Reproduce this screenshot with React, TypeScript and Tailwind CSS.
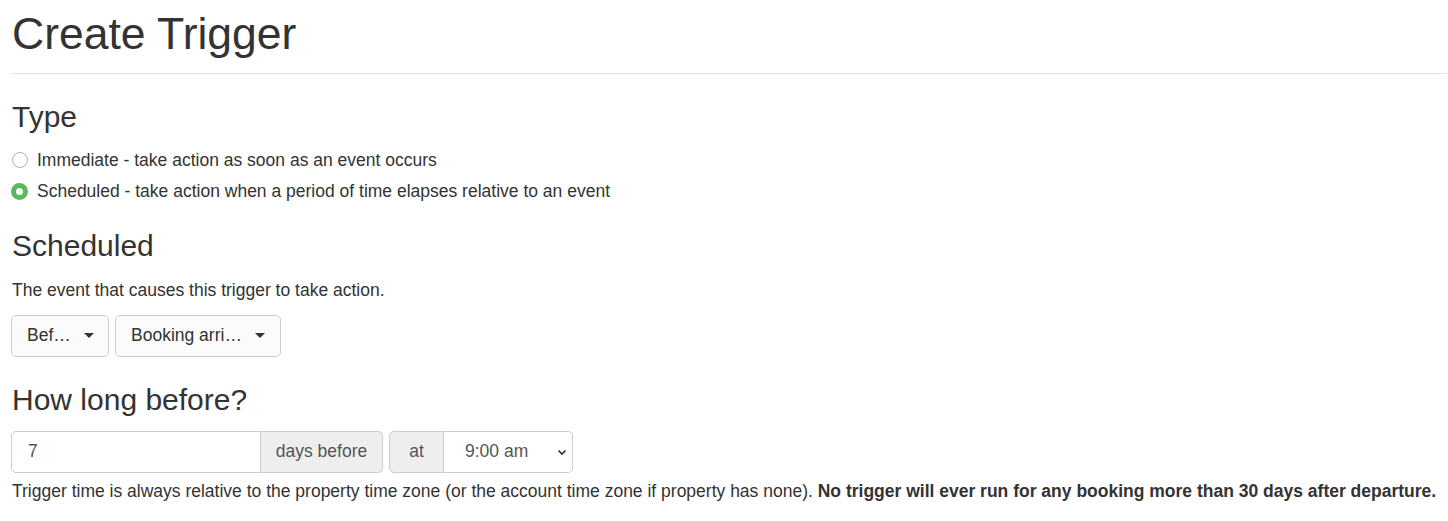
const Caret = () => (
    <span className="ml-[13px] inline-block h-0 w-0 border-x-[5px] border-t-[5px] border-x-transparent border-t-[#333]" />
)

const Radio = ({ checked, label }: { checked?: boolean; label: string }) => (
    <label className="flex h-[25px] items-center">
        {checked ? (
            <span className="box-border h-[17px] w-[17px] shrink-0 rounded-full border-[5px] border-[#5cb85c] bg-white" />
        ) : (
            <span className="ml-px box-border h-[16px] w-[16px] shrink-0 rounded-full border border-[#b3b3b3] bg-white" />
        )}
        <span className="ml-[9px]">{label}</span>
    </label>
)

export default function App() {
    return (
        <div
            className="bg-white pl-[11px] pr-px pt-[9px] text-[17.5px] leading-[25px] text-[#333]"
            style={{ fontFamily: '"Liberation Sans", Arial, sans-serif' }}
        >
            <h1 className="pl-px text-[44.5px] leading-[49.5px]">Create Trigger</h1>
            <hr className="mt-[14px] border-t border-[#e3e3e3]" />

            <h3 className="mt-[26px] pl-px text-[30px] leading-[33px]">Type</h3>
            <div className="mt-[15px] flex flex-col gap-[6px]">
                <Radio label="Immediate - take action as soon as an event occurs" />
                <Radio checked label="Scheduled - take action when a period of time elapses relative to an event" />
            </div>

            <h3 className="mt-[25px] pl-px text-[30px] leading-[33px]">Scheduled</h3>
            <p className="mt-[16px] pl-px">The event that causes this trigger to take action.</p>

            <div className="mt-[12px] flex gap-[6px]">
                <button className="flex h-[42px] w-[98px] items-center rounded-[5px] border border-[#ccc] bg-[#fbfbfb] pl-[15px] text-[#333]">
                    Bef…
                    <Caret />
                </button>
                <button className="flex h-[42px] w-[166px] items-center rounded-[5px] border border-[#ccc] bg-[#fbfbfb] pl-[15px] text-[#333]">
                    Booking arri…
                    <Caret />
                </button>
            </div>

            <h3 className="mt-[26px] pl-px text-[30px] leading-[33px]">How long before?</h3>

            <div className="mt-[15px] flex gap-[6px]">
                <div className="flex h-[42px]">
                    <div className="flex w-[250px] items-center rounded-l-[5px] border border-[#ccc] bg-white pl-[16px] text-[#555]">7</div>
                    <div className="flex w-[122px] items-center justify-center rounded-r-[5px] border border-l-0 border-[#ccc] bg-[#eee] text-[#555]">
                        days before
                    </div>
                </div>
                <div className="flex h-[42px]">
                    <div className="flex w-[55px] items-center justify-center rounded-l-[5px] border border-[#ccc] bg-[#eee] text-[#555]">at</div>
                    <div className="flex w-[129px] items-center justify-between rounded-r-[5px] border border-l-0 border-[#ccc] bg-white pl-[21px] pr-[5px] text-[#555]">
                        9:00 am
                        <svg width="10" height="10" viewBox="0 0 10 10" fill="none">
                            <path d="M1.5 3.5 L5 7 L8.5 3.5" stroke="#333" strokeWidth="1.7" />
                        </svg>
                    </div>
                </div>
            </div>

            <p className="mt-[6px] pb-[8px] pl-px">
                Trigger time is always relative to the property time zone (or the account time zone if property has none).{" "}
                <b>No trigger will ever run for any booking more than 30 days after departure.</b>
            </p>
        </div>
    )
}
